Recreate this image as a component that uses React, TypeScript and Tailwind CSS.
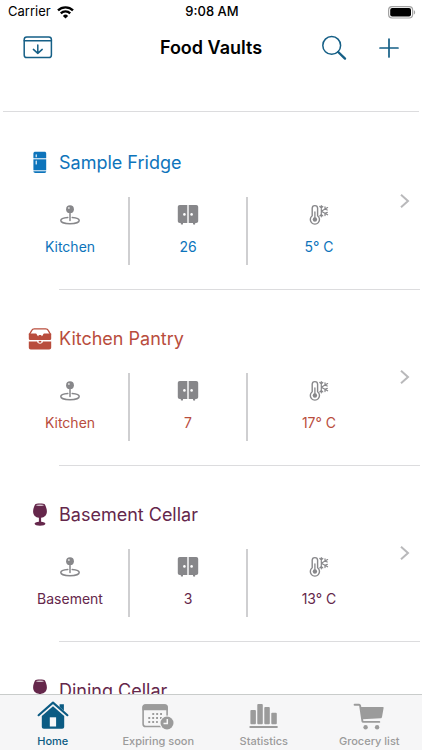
import { JSX } from "react";

interface VaultProps {
   id: number;
   name: string;
   kind: "fridge" | "pantry" | "wine";
   color: string;
   place?: string;
   items?: number;
   temperature?: string;
}

interface TabProps {
   label: string;
   icon: JSX.Element;
   active?: boolean;
}

const vaults: VaultProps[] = [
   { id: 0, name: "Sample Fridge", kind: "fridge", place: "Kitchen", items: 26, temperature: "5° C", color: "text-[#0d74bb]" },
   { id: 1, name: "Kitchen Pantry", kind: "pantry", place: "Kitchen", items: 7, temperature: "17° C", color: "text-[#b94d3d]" },
   { id: 2, name: "Basement Cellar", kind: "wine", place: "Basement", items: 3, temperature: "13° C", color: "text-[#65274b]" },
   { id: 3, name: "Dining Cellar", kind: "wine", color: "text-[#65274b]" },
];

//status bar icons
const WifiIcon = () => (
   <svg width="17" height="13" viewBox="0 0 17 13" fill="none" stroke="black" strokeWidth="2.3">
      <path d="M1 4.4a10.6 10.6 0 0 1 15 0" />
      <path d="M3.8 7.4a6.6 6.6 0 0 1 9.4 0" />
      <path d="M8.5 12.6 5.9 9.9a3.7 3.7 0 0 1 5.2 0z" fill="black" stroke="none" />
   </svg>
);

const BatteryIcon = () => (
   <svg width="28" height="13" viewBox="0 0 28 13">
      <rect x="0.6" y="0.6" width="24" height="11.4" rx="3.4" fill="none" stroke="#a3a3a3" strokeWidth="1.2" />
      <rect x="2.2" y="2.1" width="20.8" height="8.4" rx="2" fill="black" />
      <path d="M25.8 4.2c1.8.5 1.8 3.7 0 4.2z" fill="#a3a3a3" />
   </svg>
);

//header icons
const ArchiveIcon = () => (
   <svg width="30" height="24" viewBox="0 0 30 24" fill="none" stroke="currentColor" strokeWidth="1.5" strokeLinecap="round" strokeLinejoin="round">
      <rect x="1.2" y="1" width="27.2" height="20.6" rx="2.6" />
      <path d="M1.2 4.800h27.2M14.8 9v8.4M10.4 13.4l4.4 4 4.4-4" />
   </svg>
);

const SearchIcon = () => (
   <svg width="26" height="26" viewBox="0 0 26 26" fill="none" stroke="currentColor" strokeLinecap="round">
      <circle cx="10.7" cy="10.4" r="8.9" strokeWidth="1.5" />
      <path d="M17.2 17 24 23.6" strokeWidth="2.4" />
   </svg>
);

const PlusIcon = () => (
   <svg width="20" height="20" viewBox="0 0 20 20" fill="none" stroke="currentColor" strokeWidth="1.7" strokeLinecap="round">
      <path d="M10 1v18M1 10h18" />
   </svg>
);

//vault icons
const FridgeIcon = () => (
   <svg width="24" height="24" viewBox="0 0 24 24" fill="currentColor">
      <path d="M7.4.8h9.2c.9 0 1.6.7 1.6 1.600v4.800H5.400V2.400c0-.9.9-1.600 2-1.600z" />
      <path d="M5.400 8.300h12.800v11H5.400z" />
      <path d="M5.400 20.200h12.800c0 1.100-.7 1.700-1.600 1.700H7.400c-1.100 0-2-.6-2-1.700z" />
      <path d="M8.200 3.800v2M8.200 10v3" stroke="white" strokeWidth="1.100" strokeLinecap="round" />
   </svg>
);

const PantryIcon = () => (
   <svg width="24" height="24" viewBox="0 0 24 24" fill="currentColor">
      <path d="M1.300 7.800 3.600 3.600C4.200 2.400 5 1.800 6.300 1.800h11.400c1.300 0 2.100.6 2.700 1.800l2.300 4.200" fill="none" stroke="currentColor" strokeWidth="1.300" />
      <path d="M.8 6.600h7c.9 0 1 .9 1.200 1.300.3.700.9 1.200 1.600 1.300V8.100h2.800v1.100c.7-.1 1.300-.6 1.600-1.300.2-.4.3-1.300 1.200-1.300h7v4.900c0 .9-.7 1.600-1.700 1.600h-19c-1 0-1.700-.7-1.700-1.600z" />
      <path d="M.8 14.500h8.300c.2 1.300 1.200 2.200 2.900 2.200s2.700-.9 2.900-2.200h8.300v6.100c0 1.200-.8 1.900-2 1.900H2.800c-1.200 0-2-.7-2-1.900z" />
      <rect x="10.700" y="13.900" width="2.600" height="1.700" />
   </svg>
);

const WineIcon = () => (
   <svg width="24" height="24" viewBox="0 0 24 24" fill="currentColor">
      <path d="M7.300 1.200c.3-.4 1.900-.7 4.700-.7s4.400.3 4.700.7c1.200 2 2.200 4.700 2.200 7.300 0 3.800-2.500 5.900-5.800 6.200v4c2.500.2 4.300.9 4.300 2.100 0 1.300-2.400 2-5.400 2s-5.400-.7-5.400-2c0-1.200 1.800-1.900 4.300-2.100v-4c-3.300-.3-5.800-2.400-5.800-6.200 0-2.600 1-5.300 2.200-7.300z" />
      <ellipse cx="12" cy="2.200" rx="3.900" ry=".7" fill="white" opacity=".7" />
   </svg>
);

//details icons
const PinIcon = () => (
   <svg width="22" height="22" viewBox="0 0 22 22" fill="none" stroke="currentColor">
      <path d="M8.800 13.500c-4 .3-7 1.500-7 3 0 1.800 4.100 3.200 9.200 3.200s9.200-1.400 9.200-3.200c0-1.500-3-2.700-7-3" strokeWidth="1.500" strokeLinecap="round" />
      <path d="M11 8v8.600" strokeWidth="1.500" strokeLinecap="round" />
      <circle cx="11" cy="5.200" r="3.900" fill="currentColor" stroke="none" />
      <circle cx="9.900" cy="4" r="1" fill="#dadada" stroke="none" />
   </svg>
);

const CabinetIcon = () => (
   <svg width="22" height="22" viewBox="0 0 22 22" fill="currentColor">
      <path d="M2.800.9h7.500v18.200H6v1c0 .8-2.200.8-2.200 0v-1h-1c-1.200 0-2-.8-2-2V2.900c0-1.200.8-2 2-2z" />
      <path d="M19.200.9h-7.500v18.200H16v1c0 .8 2.200.8 2.200 0v-1h1c1.200 0 2-.8 2-2V2.900c0-1.200-.8-2-2-2z" />
      <circle cx="7.400" cy="10.400" r="1.300" fill="white" />
      <circle cx="14.600" cy="10.400" r="1.300" fill="white" />
   </svg>
);

const TemperatureIcon = () => (
   <svg width="22" height="22" viewBox="0 0 22 22" fill="none" stroke="currentColor" strokeLinecap="round" strokeLinejoin="round">
      <path d="M4.200 11.800V4.300a2.700 2.700 0 0 1 5.400 0v7.500a4.600 4.600 0 1 1-5.400 0z" strokeWidth="1.400" />
      <path d="M6.900 8v6" strokeWidth="1.300" />
      <circle cx="6.900" cy="15.500" r="2.200" fill="currentColor" stroke="none" />
      <path d="M13.300 1.600v11.200M13.300 7.200l6.300-3.600M13.300 7.200l6.300 3.600M11.800 2.500l1.500 1.400 1.500-1.400M11.800 11.900l1.500-1.400 1.500 1.400M17 2.800v2.300l2.300.9M17 11.600V9.300l2.300-.9" strokeWidth="1.200" />
   </svg>
);

const ChevronIcon = () => (
   <svg width="10" height="16" viewBox="0 0 10 16" fill="none" stroke="#b9b9bb" strokeWidth="2">
      <path d="M1 1.700 8 8l-7 6.300" />
   </svg>
);

//tab bar icons
const HomeIcon = () => (
   <svg width="32" height="30" viewBox="0 0 32 30" fill="currentColor">
      <path d="M1.600 14.200 16 1.600l14.400 12.600" fill="none" stroke="currentColor" strokeWidth="2.100" strokeLinecap="round" strokeLinejoin="round" />
      <path d="M22.600 3.200h4.300v6.600l-4.300-3.800z" />
      <path d="M16 5.300 27.200 15.100v10.600c0 1.200-.8 2-2 2H6.800c-1.200 0-2-.8-2-2V15.100z" />
      <path d="M12.800 16.300h6.300v9.200h-6.300z" fill="#f6f7f8" />
   </svg>
);

const CalendarIcon = () => (
   <svg width="32" height="30" viewBox="0 0 32 30">
      <rect x="1.100" y="4.100" width="24" height="21.400" rx="2.600" fill="none" stroke="currentColor" strokeWidth="1.600" />
      <path d="M.4 6.500c0-2 1.200-3.200 3.200-3.200h19c2 0 3.200 1.200 3.200 3.200v2.800H.4z" fill="currentColor" />
      <path d="M10.300 13h11.500M6.300 17h15.500M6.300 21h9.500" stroke="currentColor" strokeWidth="1.900" strokeDasharray="1.900 2" />
      <circle cx="25" cy="22" r="7.500" fill="#f6f6f7" />
      <circle cx="25" cy="22" r="6.500" fill="currentColor" />
      <path d="M25.300 18v4.500h-3.800" fill="none" stroke="#f6f6f7" strokeWidth="1.500" />
   </svg>
);

const ChartIcon = () => (
   <svg width="32" height="30" viewBox="0 0 32 30" fill="currentColor">
      <rect x="2.400" y="9" width="5.500" height="14.200" rx=".9" />
      <rect x="9.300" y="3" width="5.500" height="20.200" rx=".9" />
      <rect x="16.300" y="6" width="5.500" height="17.200" rx=".9" />
      <rect x="23.300" y="11.800" width="5.500" height="11.400" rx=".9" />
      <rect x="1.300" y="25.100" width="28.600" height="2" rx="1" />
   </svg>
);

const CartIcon = () => (
   <svg width="32" height="30" viewBox="0 0 32 30" fill="currentColor">
      <path d="M1.600 3.700h4.500c.6 0 .8.300 1 .9l2.300 15.600c.1.500.4.700.9.700h16" fill="none" stroke="currentColor" strokeWidth="1.900" strokeLinecap="round" strokeLinejoin="round" />
      <path d="M7.700 6.100h22.100c.6 0 .9.400.8 1L29 16c-.1.700-.6 1.200-1.300 1.300L9.300 18.300z" />
      <circle cx="12.600" cy="26.200" r="2.200" />
      <circle cx="24.100" cy="26.200" r="2.200" />
   </svg>
);

const tabs: TabProps[] = [
   { label: "Home", icon: <HomeIcon />, active: true },
   { label: "Expiring soon", icon: <CalendarIcon /> },
   { label: "Statistics", icon: <ChartIcon /> },
   { label: "Grocery list", icon: <CartIcon /> },
];

const vaultIcons = {
   fridge: <FridgeIcon />,
   pantry: <PantryIcon />,
   wine: <WineIcon />,
};

const Detail = ({ icon, text, className }: { icon: JSX.Element, text?: string | number, className: string }) => (
   <div className={`flex h-[68px] flex-col items-center gap-[9px] pt-[7px] ${className}`}>
      <span className="text-[#87878a]">{icon}</span>
      <p className="text-sm leading-6">{text}</p>
   </div>
);

const VaultRow = ({ vault }: { vault: VaultProps }) => {

   const { name, kind, place, items, temperature, color } = vault;

   return (
      <li>
         <a href="#" className={`block h-44 pt-9 ${color}`}>
            <div className="flex items-center gap-[7px] pl-7">
               {vaultIcons[kind]}
               <h2 className="text-lg leading-7">{name}</h2>
            </div>
            {place && (
               <>
                  <div className="mt-5 flex pl-3">
                     <Detail icon={<PinIcon />} text={place} className="w-[118px] border-r-2 border-[#cfcfd1]" />
                     <Detail icon={<CabinetIcon />} text={items} className="w-[118px] border-r-2 border-[#cfcfd1]" />
                     <Detail icon={<TemperatureIcon />} text={temperature} className="flex-1" />
                     <span className="-mt-1 w-8 pl-[10px]">
                        <ChevronIcon />
                     </span>
                  </div>
                  <div className="mt-6 ml-[59px] mr-0.5 border-t border-[#dcdcde]" />
               </>
            )}
         </a>
      </li>
   );
}

export default function App() {
   return (
      <div className="flex h-dvh flex-col bg-white font-['Inter',sans-serif] text-black">
         <div className="grid h-6 grid-cols-3 items-center pl-2 pr-1.5 text-[13px]">
            <div className="flex items-center gap-1.5">
               <span>Carrier</span>
               <WifiIcon />
            </div>
            <span className="text-center font-medium">9:08 AM</span>
            <div className="flex justify-end">
               <BatteryIcon />
            </div>
         </div>

         <header className="grid h-12 grid-cols-3 items-center pl-[23px] pr-[23px] text-[#155f86]">
            <button aria-label="Archive" className="justify-self-start">
               <ArchiveIcon />
            </button>
            <h1 className="whitespace-nowrap text-center text-lg font-semibold text-black">Food Vaults</h1>
            <div className="flex items-center justify-end gap-8">
               <button aria-label="Search"><SearchIcon /></button>
               <button aria-label="Add"><PlusIcon /></button>
            </div>
         </header>

         <main className="flex-1 overflow-y-auto [scrollbar-width:none]">
            <div className="mx-[3px] h-10 border-b border-[#dcdcde]" />
            <ul className="pt-px">
               {vaults.map((vault) => <VaultRow key={vault.id} vault={vault} />)}
            </ul>
         </main>

         <nav className="grid h-14 grid-cols-4 border-t border-[#c9cccb] bg-[#f6f6f7]">
            {tabs.map(({ label, icon, active }) => (
               <button
                  key={label}
                  className={`flex flex-col items-center gap-0.5 pt-1.5 text-[11px] leading-4 font-medium ${active ? "text-[#0b5b83]" : "text-[#9b9b9b]"}`}>
                  {icon}
                  {label}
               </button>
            ))}
         </nav>
      </div>
   );
}
